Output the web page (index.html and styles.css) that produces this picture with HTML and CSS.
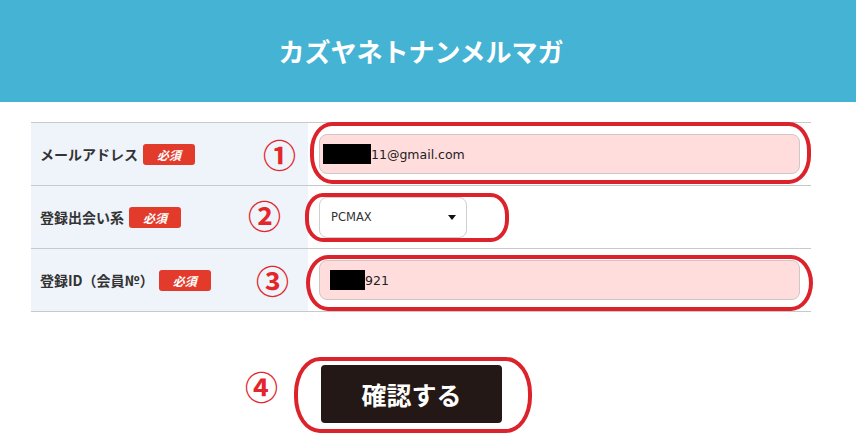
FILE: index.html
```html
<!DOCTYPE html>
<html lang="ja">
<head>
    <meta charset="UTF-8">
    <meta name="viewport" content="width=device-width, initial-scale=1.0">
    <title>カズヤネトナンメルマガ</title>
    <link rel="stylesheet" href="styles.css">
</head>
<body>

    <header class="site-header">
        <h1>カズヤネトナンメルマガ</h1>
    </header>

    <form class="signup">
        <div class="rows">
            <div class="row">
                <div class="label">メールアドレス <span class="req">必須</span></div>
                <div class="field">
                    <div class="input"><span class="mask mask-mail"></span>11@gmail.com</div>
                </div>
            </div>
            <div class="row">
                <div class="label">登録出会い系 <span class="req">必須</span></div>
                <div class="field">
                    <div class="select">PCMAX<span class="caret"></span></div>
                </div>
            </div>
            <div class="row">
                <div class="label">登録ID（会員№） <span class="req">必須</span></div>
                <div class="field">
                    <div class="input"><span class="mask mask-id"></span>921</div>
                </div>
            </div>
        </div>

        <div class="actions">
            <button type="button" class="submit">確認する</button>
        </div>
    </form>

    <!-- red hand-drawn notes -->
    <span class="num num-1">①</span>
    <span class="num num-2">②</span>
    <span class="num num-3">③</span>
    <span class="num num-4">④</span>
    <div class="ring ring-1"></div>
    <div class="ring ring-2"></div>
    <div class="ring ring-3"></div>
    <div class="ring ring-4"></div>

</body>
</html>
```

FILE: styles.css
```css
body {
    margin: 0;
    font-family: "Noto Sans CJK JP", "Noto Sans", sans-serif;
    color: #222;
    background: #fff;
    position: relative;
    height: 448px;
    overflow: hidden;
}
.site-header {
    background-color: #44b3d4;
    height: 102px;
    display: flex;
    align-items: center;
    justify-content: center;
    padding-right: 14px;
}
.site-header h1 {
    margin: 0 0 2px;
    color: #fff;
    font-size: 26px;
    font-weight: bold;
}
.signup {
    margin: 20px 45px 0 31px;
}
.rows {
    border-bottom: 1px solid #c9c9c9;
}
.row {
    display: flex;
    height: 62px;
    border-top: 1px solid #c9c9c9;
}
.label {
    width: 268px;
    padding-left: 9px;
    background: #eef4fa;
    display: flex;
    align-items: center;
    gap: 4px;
    font-size: 14px;
    font-weight: bold;
    color: #333;
}
.req {
    display: inline-block;
    background: #e23b2c;
    color: #fff;
    font-size: 12px;
    font-weight: bold;
    font-style: italic;
    border-radius: 3px;
    width: 52px;
    height: 21px;
    line-height: 21px;
    text-align: center;
    margin-left: 1px;
}
.field {
    flex: 1;
    padding: 0 11px;
    display: flex;
    align-items: center;
}
.input {
    width: 100%;
    height: 40px;
    box-sizing: border-box;
    background: #ffdddd;
    border: 1px solid #cfc6c6;
    border-radius: 8px;
    display: flex;
    align-items: center;
    padding-left: 3px;
    font-family: "DejaVu Sans", sans-serif;
    font-size: 12.5px;
    color: #222;
}
.mask {
    display: inline-block;
    background: #000;
    height: 20px;
}
.mask-mail {
    width: 48px;
}
.mask-id {
    width: 35px;
    margin-left: 7px;
}
.select {
    width: 148px;
    height: 41px;
    box-sizing: border-box;
    border: 1px solid #cfcfcf;
    border-radius: 8px;
    background: #fff;
    display: flex;
    align-items: center;
    justify-content: space-between;
    padding: 0 10px 0 11px;
    font-family: "DejaVu Sans", sans-serif;
    font-size: 11.5px;
    color: #333;
}
.caret {
    width: 0;
    height: 0;
    border-left: 4px solid transparent;
    border-right: 4px solid transparent;
    border-top: 5px solid #111;
}
.actions {
    padding: 53px 0 0 290px;
}
.submit {
    width: 181px;
    height: 58px;
    border: none;
    border-radius: 4px;
    background: #231815;
    color: #fff;
    font-family: "Noto Sans CJK JP", sans-serif;
    font-size: 25px;
    font-weight: bold;
    cursor: pointer;
}

/* annotations */
.num {
    position: absolute;
    color: #e3262b;
    font-size: 33px;
    font-weight: bold;
    line-height: 34px;
}
.num-1 { left: 263px; top: 137px; }
.num-2 { left: 248px; top: 198px; }
.num-3 { left: 256px; top: 263px; }
.num-4 { left: 245px; top: 369px; }
.ring {
    position: absolute;
    border: 4px solid #dc222b;
    border-radius: 22px / 28px;
    box-sizing: border-box;
}
.ring-1 { left: 310px; top: 122px; width: 501px; height: 62px; }
.ring-2 { left: 305px; top: 193px; width: 204px; height: 49px; border-radius: 18px / 22px; }
.ring-3 { left: 306px; top: 255px; width: 507px; height: 56px; }
.ring-4 { left: 294px; top: 357px; width: 238px; height: 76px; border-radius: 26px / 36px; }
```
